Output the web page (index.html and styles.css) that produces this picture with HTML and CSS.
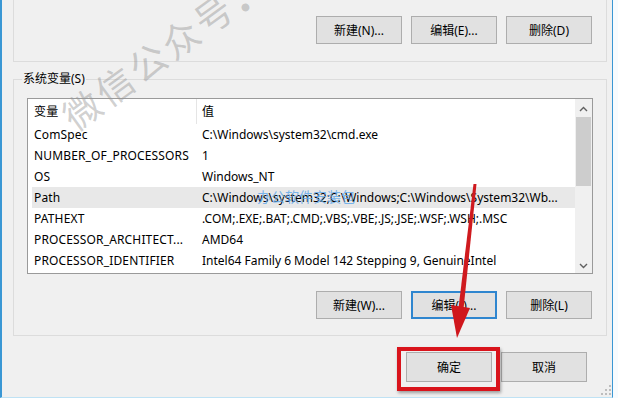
FILE: index.html
```html
<!DOCTYPE html>
<html lang="zh-CN">
<head>
<meta charset="utf-8">
<title>环境变量</title>
<link rel="stylesheet" href="styles.css">
</head>
<body>
<div class="window">
  <div class="group group-user">
    <div class="btn-row">
      <button class="btn">新建(N)...</button>
      <button class="btn">编辑(E)...</button>
      <button class="btn">删除(D)</button>
    </div>
  </div>

  <div class="group group-sys">
    <div class="group-title">系统变量(S)</div>
    <div class="list">
      <div class="list-main">
        <div class="row head"><div class="c1">变量</div><div class="c2">值</div></div>
        <div class="row"><div class="c1">ComSpec</div><div class="c2">C:\Windows\system32\cmd.exe</div></div>
        <div class="row"><div class="c1">NUMBER_OF_PROCESSORS</div><div class="c2">1</div></div>
        <div class="row"><div class="c1">OS</div><div class="c2">Windows_NT</div></div>
        <div class="row selected"><div class="c1">Path</div><div class="c2">C:\Windows\system32;C:\Windows;C:\Windows\System32\Wb...</div></div>
        <div class="row"><div class="c1">PATHEXT</div><div class="c2">.COM;.EXE;.BAT;.CMD;.VBS;.VBE;.JS;.JSE;.WSF;.WSH;.MSC</div></div>
        <div class="row"><div class="c1">PROCESSOR_ARCHITECT...</div><div class="c2">AMD64</div></div>
        <div class="row"><div class="c1">PROCESSOR_IDENTIFIER</div><div class="c2">Intel64 Family 6 Model 142 Stepping 9, GenuineIntel</div></div>
      </div>
      <div class="scrollbar">
        <div class="sb-btn"><svg width="9" height="6" viewBox="0 0 9 6"><path d="M1 5 L4.5 1.5 L8 5" fill="none" stroke="#606060" stroke-width="1.4"/></svg></div>
        <div class="sb-track"><div class="sb-thumb"></div></div>
        <div class="sb-btn"><svg width="9" height="6" viewBox="0 0 9 6"><path d="M1 1 L4.5 4.5 L8 1" fill="none" stroke="#606060" stroke-width="1.4"/></svg></div>
      </div>
    </div>
    <div class="btn-row btn-row-sys">
      <button class="btn">新建(W)...</button>
      <button class="btn btn-focus">编辑(I)...</button>
      <button class="btn">删除(L)</button>
    </div>
  </div>

  <div class="dlg-row">
    <div class="ok-wrap">
      <button class="btn btn-dlg">确定</button>
      <div class="callout-box"></div>
    </div>
    <button class="btn btn-dlg">取消</button>
  </div>

  <svg class="grip" width="10" height="10" viewBox="0 0 10 10">
    <rect x="8" y="0" width="2" height="2" fill="#bdbdbd"/>
    <rect x="8" y="4" width="2" height="2" fill="#bdbdbd"/>
    <rect x="4" y="4" width="2" height="2" fill="#bdbdbd"/>
    <rect x="8" y="8" width="2" height="2" fill="#bdbdbd"/>
    <rect x="4" y="8" width="2" height="2" fill="#bdbdbd"/>
    <rect x="0" y="8" width="2" height="2" fill="#bdbdbd"/>
  </svg>

  <div class="wm wm-gray">微信公众号<span class="wm-dot">·</span></div>
  <div class="wm wm-blue">办公软件安装包</div>

  <svg class="arrow" width="613" height="398" viewBox="0 0 613 398">
    <polygon points="473.5,184 476.5,184 463.5,309 458.5,308" fill="#cf1a1f"/>
    <polygon points="451,305 470,308 457,338" fill="#d0161c"/>
  </svg>
</div>
</body>
</html>
```

FILE: styles.css
```css
* { box-sizing: border-box; }

html, body {
  margin: 0;
  padding: 0;
  background: #f7fbfe;
}

body {
  font-family: "Noto Sans", "Noto Sans CJK SC", sans-serif;
  font-size: 12px;
  color: #000;
}

.window {
  position: relative;
  width: 613px;
  height: 398px;
  background: #f0f0f0;
  border-left: 2px solid #3a97d4;
  border-right: 1px solid #3a97d4;
  border-bottom: 1px solid #bfe2f4;
  overflow: hidden;
}

.group {
  margin: 0 5px 0 11px;
  border: 1px solid #dcdcdc;
}

.group-user {
  border-top: none;
  padding: 16px 14px 17px 0;
}

.group-sys {
  margin-top: 17px;
  padding: 0 0 16px 0;
}

.group-title {
  width: fit-content;
  margin: -9px 0 0 8px;
  padding: 0 1px;
  line-height: 16px;
  height: 16px;
  background: #f0f0f0;
  color: #000;
}

.btn-row {
  display: flex;
  justify-content: flex-end;
  gap: 9px;
}

.btn-row-sys {
  margin-top: 17px;
  padding-right: 14px;
}

.btn {
  width: 86px;
  height: 28px;
  padding: 0;
  margin: 0;
  background: #e1e1e1;
  border: 1px solid #adadad;
  font-family: "Noto Sans", "Noto Sans CJK SC", sans-serif;
  font-size: 12px;
  color: #000;
  text-align: center;
}

.btn-focus {
  border: 2px solid #2f86cf;
}

/* list view */
.list {
  display: flex;
  margin: 11px 0 0 13px;
  width: 566px;
  height: 176px;
  border: 1px solid #9a9a9a;
  background: #fff;
}

.list-main {
  flex: 1;
  overflow: hidden;
}

.row {
  display: flex;
  height: 21px;
  line-height: 21px;
  margin-left: 4px;
  white-space: nowrap;
}

.row.head {
  height: 25px;
  line-height: 25px;
}

.row.selected {
  background: #e8e8e8;
}

.c1 {
  width: 164px;
  padding-left: 2px;
  overflow: hidden;
  letter-spacing: 0.15px;
}

.c2 {
  flex: 1;
  padding-left: 6px;
  overflow: hidden;
}

.head .c2 {
  border-left: 1px solid #e5e5e5;
  padding-left: 5px;
}

.scrollbar {
  width: 17px;
  display: flex;
  flex-direction: column;
  background: #f0f0f0;
}

.sb-btn {
  height: 17px;
  display: flex;
  align-items: center;
  justify-content: center;
  padding-top: 2px;
}

.sb-track {
  flex: 1;
  padding: 1px 1px 0 1px;
}

.sb-thumb {
  height: 69px;
  background: #cdcdcd;
}

/* dialog buttons */
.dlg-row {
  display: flex;
  justify-content: flex-end;
  gap: 9px;
  margin-top: 16px;
  padding-right: 25px;
}

.btn-dlg {
  height: 30px;
}

.ok-wrap {
  position: relative;
}

.callout-box {
  position: absolute;
  left: -9px;
  top: -5px;
  width: 103px;
  height: 44px;
  border: 4px solid #d9141c;
  box-shadow: 1px 2px 3px rgba(0, 0, 0, 0.35);
}

.grip {
  position: absolute;
  right: 1px;
  bottom: 2px;
}

.arrow {
  position: absolute;
  left: -2px;
  top: 0;
  pointer-events: none;
}

/* watermarks */
.wm {
  position: absolute;
  white-space: nowrap;
  pointer-events: none;
  font-family: "Noto Sans CJK SC", sans-serif;
}

.wm-gray {
  left: 45px;
  top: 41px;
  font-size: 37px;
  letter-spacing: 3.5px;
  line-height: 40px;
  color: rgba(150, 150, 150, 0.45);
  transform: rotate(-36deg);
  transform-origin: 99.5px 20px;
}

.wm-dot {
  display: inline-block;
  transform: translate(-10px, 13px);
}

.wm-blue {
  left: 255px;
  top: 188px;
  font-size: 14px;
  line-height: 17px;
  color: rgba(100, 170, 235, 0.85);
}
```
